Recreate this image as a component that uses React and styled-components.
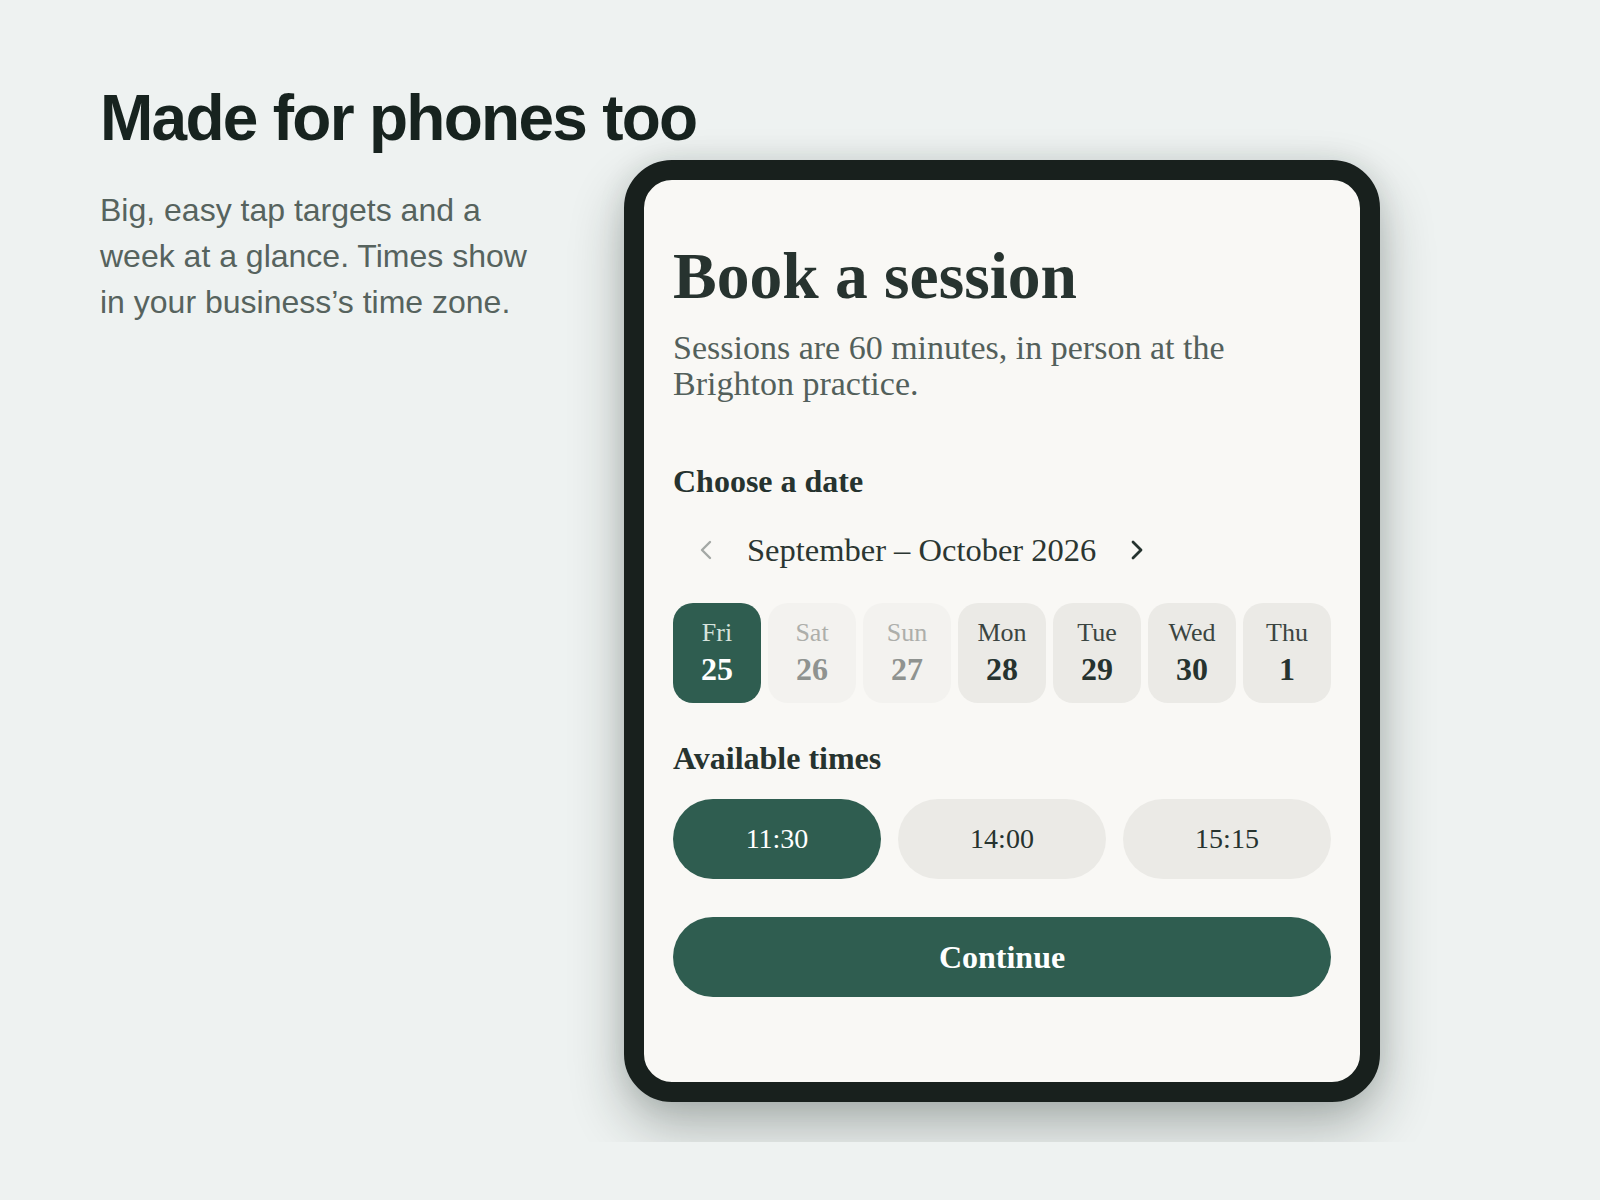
import React from "react";
import styled, { createGlobalStyle } from "styled-components";

const GlobalStyle = createGlobalStyle`
  html, body {
    margin: 0;
    padding: 0;
    background: #eef2f1;
  }
  * {
    box-sizing: border-box;
  }
`;

const days = [
  { name: "Fri", num: "25", state: "selected" },
  { name: "Sat", num: "26", state: "disabled" },
  { name: "Sun", num: "27", state: "disabled" },
  { name: "Mon", num: "28", state: "open" },
  { name: "Tue", num: "29", state: "open" },
  { name: "Wed", num: "30", state: "open" },
  { name: "Thu", num: "1", state: "open" },
];

const times = ["11:30", "14:00", "15:15"];

function Chevron({ dir, color, width }) {
  const pts = dir === "left" ? "10,2 2,10 10,18" : "2,2 10,10 2,18";
  return (
    <svg width="12" height="20" viewBox="0 0 12 20" fill="none">
      <polyline
        points={pts}
        stroke={color}
        strokeWidth={width}
        strokeLinecap="round"
        strokeLinejoin="round"
      />
    </svg>
  );
}

export default function App() {
  return (
    <Section>
      <GlobalStyle />
      <Heading>Made for phones too</Heading>
      <Row>
        <Intro>
          Big, easy tap targets and a week at a glance. Times show in your
          business’s time zone.
        </Intro>
        <Phone>
          <Title>Book a session</Title>
          <Sub>Sessions are 60 minutes, in person at the Brighton practice.</Sub>

          <Label $top={60}>Choose a date</Label>
          <Nav>
            <NavButton aria-label="Previous week">
              <Chevron dir="left" color="#a4a8a5" width={2.4} />
            </NavButton>
            <Range>September – October 2026</Range>
            <NavButton aria-label="Next week">
              <Chevron dir="right" color="#26332f" width={2.8} />
            </NavButton>
          </Nav>

          <Days>
            {days.map((d) => (
              <Day key={d.name} $state={d.state}>
                <DayName $state={d.state}>{d.name}</DayName>
                <DayNum $state={d.state}>{d.num}</DayNum>
              </Day>
            ))}
          </Days>

          <Label $top={36}>Available times</Label>
          <Times>
            {times.map((t, i) => (
              <TimePill key={t} $active={i === 0}>
                {t}
              </TimePill>
            ))}
          </Times>

          <Continue>Continue</Continue>
        </Phone>
      </Row>
    </Section>
  );
}

const Section = styled.section`
  padding: 83px 100px 40px;
  overflow: hidden;
`;

const Heading = styled.h1`
  margin: 0 0 7px;
  font-family: "Liberation Sans", Arial, sans-serif;
  font-weight: 700;
  font-size: 64px;
  line-height: 1.1;
  letter-spacing: -0.027em;
  color: #17231f;
`;

const Row = styled.div`
  display: flex;
  align-items: flex-start;
  gap: 84px;
`;

const Intro = styled.p`
  width: 440px;
  margin: 27px 0 0;
  font-family: "Liberation Sans", Arial, sans-serif;
  font-size: 32px;
  line-height: 46px;
  color: #56635e;
`;

const Phone = styled.div`
  width: 756px;
  flex-shrink: 0;
  border: 20px solid #18201d;
  border-radius: 48px;
  background: #f9f8f5;
  padding: 61px 29px 85px;
  box-shadow: 0 26px 54px rgba(22, 36, 31, 0.3), 0 0 28px rgba(22, 36, 31, 0.1);
  font-family: "Liberation Serif", "Times New Roman", serif;
  color: #26332f;
`;

const Title = styled.h2`
  margin: 0;
  font-size: 65.5px;
  font-weight: 700;
  line-height: 71px;
  color: #27332f;
`;

const Sub = styled.p`
  margin: 18px 0 0;
  font-size: 34px;
  line-height: 36px;
  color: #53605b;
`;

const Label = styled.h3`
  margin: ${(p) => p.$top}px 0 0;
  font-size: 32px;
  font-weight: 700;
  line-height: 1.2;
  color: #26332f;
`;

const Nav = styled.div`
  margin-top: 25px;
  height: 48px;
  display: flex;
  align-items: center;
  gap: 8px;
`;

const NavButton = styled.button`
  width: 66px;
  height: 48px;
  padding: 0;
  border: 0;
  background: transparent;
  display: flex;
  align-items: center;
  justify-content: center;
  cursor: pointer;
`;

const Range = styled.span`
  font-size: 32.5px;
  line-height: 48px;
  color: #2b3632;
`;

const Days = styled.div`
  margin-top: 29px;
  display: grid;
  grid-template-columns: repeat(7, 1fr);
  gap: 7px;
`;

const dayBg = { selected: "#2f5d50", disabled: "#f3f2ef", open: "#ebeae6" };

const Day = styled.div`
  height: 100px;
  border-radius: 20px;
  background: ${(p) => dayBg[p.$state]};
  display: flex;
  flex-direction: column;
  align-items: center;
  justify-content: center;
  gap: 2px;
`;

const DayName = styled.span`
  font-size: 26px;
  line-height: 1.2;
  color: ${(p) =>
    p.$state === "selected" ? "#d6e3dd" : p.$state === "disabled" ? "#adaeaa" : "#3b4541"};
`;

const DayNum = styled.span`
  font-size: 32px;
  font-weight: 700;
  line-height: 1.2;
  color: ${(p) =>
    p.$state === "selected" ? "#ffffff" : p.$state === "disabled" ? "#8f9390" : "#26332f"};
`;

const Times = styled.div`
  margin-top: 22px;
  display: grid;
  grid-template-columns: repeat(3, 1fr);
  gap: 17px;
`;

const TimePill = styled.button`
  height: 80px;
  border: 0;
  border-radius: 40px;
  background: ${(p) => (p.$active ? "#2f5d50" : "#ebeae6")};
  color: ${(p) => (p.$active ? "#ffffff" : "#26332f")};
  font-family: "Liberation Serif", "Times New Roman", serif;
  font-size: 28px;
  cursor: pointer;
`;

const Continue = styled.button`
  display: block;
  width: 100%;
  margin-top: 38px;
  height: 80px;
  border: 0;
  border-radius: 40px;
  background: #2f5d50;
  color: #ffffff;
  font-family: "Liberation Serif", "Times New Roman", serif;
  font-size: 32px;
  font-weight: 700;
  cursor: pointer;
`;
